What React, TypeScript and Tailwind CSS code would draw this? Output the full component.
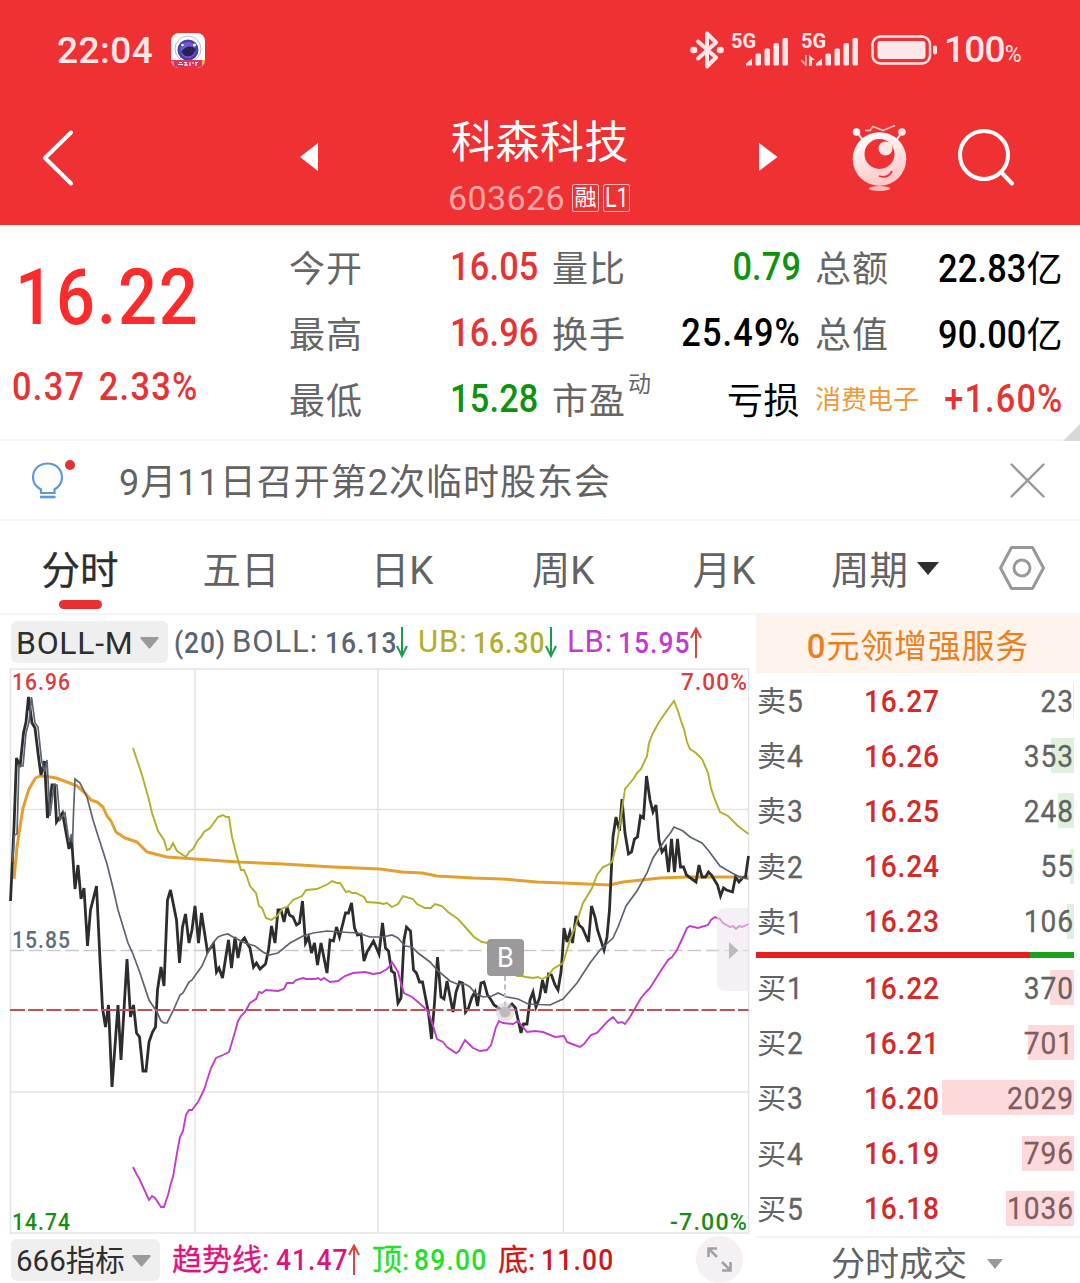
import type { ReactNode } from "react";
import { clsx } from "clsx";

type Metric = { label: string; value: string; unit?: string; tone: string; sup?: string; tag?: boolean };

const METRICS: Metric[][] = [
  [
    { label: "今开", value: "16.05", tone: "text-[#e63434]" },
    { label: "最高", value: "16.96", tone: "text-[#e63434]" },
    { label: "最低", value: "15.28", tone: "text-[#0f930f]" },
  ],
  [
    { label: "量比", value: "0.79", tone: "text-[#0f930f]" },
    { label: "换手", value: "25.49%", tone: "text-black" },
    { label: "市盈", value: "", unit: "亏损", tone: "text-black", sup: "动" },
  ],
  [
    { label: "总额", value: "22.83", unit: "亿", tone: "text-black" },
    { label: "总值", value: "90.00", unit: "亿", tone: "text-black" },
    { label: "消费电子", value: "+1.60%", tone: "text-[#e63434]", tag: true },
  ],
];

const TABS = ["分时", "五日", "日K", "周K", "月K"];

const ASKS = [
  { label: "卖5", price: "16.27", volume: 23 },
  { label: "卖4", price: "16.26", volume: 353 },
  { label: "卖3", price: "16.25", volume: 248 },
  { label: "卖2", price: "16.24", volume: 55 },
  { label: "卖1", price: "16.23", volume: 106 },
];

const BIDS = [
  { label: "买1", price: "16.22", volume: 370 },
  { label: "买2", price: "16.21", volume: 701 },
  { label: "买3", price: "16.20", volume: 2029 },
  { label: "买4", price: "16.19", volume: 796 },
  { label: "买5", price: "16.18", volume: 1036 },
];

const MAX_VOLUME = 2029;

// Chart series, "x,y" pairs in the chart's own viewBox
const PRICE =
  "10.5,901 14,827 16.5,758 20,767 23.5,733 26,722 28.5,697 32,723 35,728 38.5,757 41,775 44.5,761 47.5,818 52,785 54.5,785 56.5,822 62.5,813 69,849 71.5,837 75,889 78,865 81,899 84,888 87.5,946 90.5,910 96.5,886 100,960 102.5,1008 105.5,1027 108.5,1005 112,1087 118,1005 121,1060 127,959 130.5,1017 133.5,1005 136.5,1033 139.5,1037 143,1071 146,1071 149,1042 152.5,1032 155.5,1027 157.5,990 161,967 164,986 167.5,900 170.5,890 176.5,920 179.5,963 182.5,927 185.5,914 189,943 192,930 195,906 198.5,943 201.5,913 207.5,952 213.5,944 216.5,972 219,968 222.5,978 228.5,940 231.5,968 235,937 238,958 241,942 244.5,938 247.5,944 250,948 253.5,967 256.5,963 260,969 265.5,964 268.5,950 271.5,926 275,943 278,910 281,910 284,922 287,907 289.5,915 293,917 296.5,925 299.5,923 302.5,901 305.5,943 308.5,937 311.5,953 314.5,943 317.5,965 321,943 327,973 330,940 333.5,941 336.5,927 339.5,937 345.5,913 348.5,913 351.5,903 354.5,928 357.5,935 361,934 364,961 367,952 373.5,941 379,954 382.5,923 385.5,948 388.5,951 391.5,971 394.5,973 398,1003 401,998 404,940 406.5,927 410.5,931 413.5,970 416.5,973 419.5,982 422.5,982 428.5,1013 431.5,1039 434.5,1003 437.5,957 441,997 444,999 447,981 453,1012 456,992 459.5,982 462.5,983 465.5,1012 468.5,1008 472,997 475,992 477.5,1006 481,983 484,982 487.5,995 490.5,999 494,1005 498.5,1008 505,1013 509,1007 512,1004 515.5,1008 521,1033 523.5,1024 527,1024 530,1000 533,992 536,1007 539.5,998 542.5,980 545.5,993 548.5,974 551.5,975 555,985 558,990 561,972 562.5,953 564,928 567,942 570,932 572.5,943 576,916 579,925 582.5,928 588.5,942 591.5,906 595,917 597.5,930 604,950 607,937 609.5,910 611.5,867 613,837 616,817 619.5,831 622,799 625,833 628.5,854 631.5,852 634.5,839 637.5,837 640.5,816 643.5,818 646.5,776 650,800 653,812 656,805 659,840 662,852 665.5,847 668.5,872 671.5,839 674.5,872 677.5,839 680.5,867 683.5,867 686.5,875 696,882 699,865 702,877 705.5,877 708.5,872 711.5,875 717.5,885 720.5,896 723.5,888 726.5,890 732.5,892 735.5,877 739,882 742.5,878 745.5,877 748.5,856";

const AVERAGE =
  "14,879 17,847 20,827 23,808 29,789 35.5,778 40,776 50,777 56,778 67,782 77,786 85,793 91,800 97,802 103,807 107,816 111,821 116,832 125,838 137,842 147,852 167,857 195,859 238,862 283,864 333,867 380,869 402,872 422,873 437,876 473,878 503,879 537,882 563,883 610,885 618,883 623,882 660,878 687,877 748.5,877";

const MID =
  "12.5,862 14.5,835 17,834 19,765 23,766 26,733 29,722 31.5,697 35,723 38,727 41.5,760 44.5,772 47,760 50,816 54,785 57,785 60,820 65,813 69,842 71.5,834 72.5,843 73.5,813 75,779 80,783 87,797 93,820 100,842 107,864 113,888 118,910 128,943 133,954 140,973 149,1000 157,1012 161,1021 164,1023 167,1023 173,1011 177,1002 180,995 183,993 189,982 192,980 202,966 208,952 213,943 218,937 223,935 228,934 233,937 245,943 255,946 263,952 269,955 278,953 290,943 303,936 313,933 327,931 340,932 358,933 370,937 383,937 392,935 398,938 405,946 412,947 418,953 430,962 437,970 450,981 457,984 465,984 470,987 475,993 483,997 492,996 498,993 507,997 518,999 528,1004 550,1005 563,999 577,983 590,963 600,950 613,938 618,927 626,906 637,891 647,873 653,858 665,840 671,832 674,827 683,831 690,837 702,843 708,850 720,866 732,873 742,878 748.5,879";

const UPPER =
  "133,748 142,775 149,800 152,813 158,831 164,840 167,850 170,849 173,843 177,851 186,857 189,852 193,849 198,840 201,837 204,832 210,828 218,817 223,815 226,817 229,817 232,837 236,853 241,870 244,870 247,877 250,886 256,893 259,906 262,908 266,918 271,920 277,916 283,908 287,907 293,900 302,896 306,890 317,889 328,884 332,881 337,883 340,883 346,892 349,891 352,893 356,893 364,897 367,902 380,903 383,904 387,903 392,907 398,904 403,896 413,899 417,904 425,908 431,908 435,904 442,906 448,912 458,919 467,929 474,937 482,942 488,943 503,965 517,976 522,976 526,977 533,978 538,977 542,979 548,976 553,969 563,963 567,950 570,940 575,927 583,903 592,888 597,875 603,867 608,865 612,862 617,843 621,817 625,789 630,783 634,778 637,773 641,769 647,756 649,743 653,733 659,722 668,709 674,701 678,711 681,721 684,729 687,742 690,749 696,753 702,759 708,773 711,788 714,797 720,812 728,816 738,826 748.5,834";

const LOWER =
  "133,1167 137,1175 139,1178 149,1200 152,1196 155,1198 161,1207 164,1207 168,1195 171,1183 173,1177 177,1153 180,1137 183,1131 186,1115 189,1110 192,1110 195,1106 198,1102 204,1090 211,1068 216,1058 223,1055 229,1052 235,1032 238,1021 241,1016 245,1012 250,1003 256,999 259,992 262,993 266,990 278,991 284,989 287,983 293,983 296,980 303,978 306,979 315,979 318,978 321,980 324,978 330,982 338,981 345,976 353,973 365,972 373,974 380,973 387,969 389,967 392,962 398,972 401,983 404,993 412,997 418,1002 427,1010 432,1022 437,1039 443,1042 447,1047 456,1053 459,1051 465,1040 473,1048 480,1051 487,1050 491,1045 493,1038 496,1027 499,1021 503,1023 513,1024 518,1021 527,1032 535,1031 543,1032 555,1037 564,1036 567,1042 572,1044 580,1047 584,1044 591,1035 597,1033 607,1022 613,1017 618,1023 622,1022 625,1024 630,1017 641,998 647,991 650,988 660,972 668,960 672,957 677,950 683,937 687,928 690,926 698,928 708,925 711,920 715,917 720,919 723,923 730,927 733,926 736,929 739,926 742,927 748.5,924";

// Narrow figures: condensed glyphs with open tracking
function Figure({ children, right, light, className }: { children: ReactNode; right?: boolean; light?: boolean; className?: string }) {
  return (
    <span
      className={clsx(
        "inline-block scale-x-[.88] whitespace-nowrap",
        light ? "font-normal [-webkit-text-stroke:0.300px]" : "font-medium",
        right ? "origin-right" : "origin-left",
        className,
      )}
    >
      {children}
    </span>
  );
}

function SignalBars() {
  return (
    <svg width="43" height="28" viewBox="0 0 43 28" fill="#ffe6e8">
      <path d="M0 27.500V25.500L6 20.500V26.500Q6 27.500 5 27.500Z" />
      <rect x="9.500" y="15.500" width="5.500" height="12" rx="1.500" />
      <rect x="18.500" y="10.500" width="5.500" height="17" rx="1.500" />
      <rect x="27.500" y="5" width="5.500" height="22.500" rx="1.500" />
      <rect x="36.500" y="0" width="5.500" height="27.500" rx="1.500" />
    </svg>
  );
}

function StatusBar() {
  return (
    <div className="h-[100px] flex items-center text-[#ffe6e8]">
      <span className="ml-[57px] w-[114px] text-[37px] leading-[40px] tracking-[0.500px] pt-[2px] font-medium">22:04</span>
      <svg width="34" height="35" viewBox="0 0 34 35">
        <defs>
          <clipPath id="app-icon">
            <rect width="34" height="35" rx="8" />
          </clipPath>
        </defs>
        <g clipPath="url(#app-icon)">
          <rect width="34" height="35" fill="#fff" />
          <circle cx="17" cy="16" r="13" fill="none" stroke="#b9bdc6" strokeWidth="1" />
          <circle cx="17" cy="17" r="10.500" fill="#4b3fa6" />
          <circle cx="17" cy="17" r="8" fill="#6c5bd4" />
          <path d="M10 19Q17 10 25 16Q22 25 14 23Z" fill="#2b2152" />
          <circle cx="11.500" cy="12" r="1.200" fill="#fff" />
          <circle cx="23.500" cy="12" r="1.500" fill="#fff" />
          <rect y="27" width="34" height="8" fill="#d8355f" />
          <rect y="28" width="3" height="7" fill="#e47ad0" />
          <rect x="31" y="27" width="3" height="8" fill="#f0b04a" />
          <path d="M8 29.500h3M7 31.500h5M13 29.500h3M13 32h4M15 29v4M19 29v4M21 30h2M24 29.500h3M25 29v4" stroke="#fff" strokeWidth=".9" />
        </g>
      </svg>
      <svg className="ml-[485px] shrink-0" width="34" height="38" viewBox="0 0 34 38" fill="none" stroke="#ffe6e8" strokeWidth="4" strokeLinecap="round" strokeLinejoin="round">
        <path d="M8 10.500L26 26.500L17 35.500V2.500L26 11.500L8 27.500" />
        <path d="M3.500 19h.6M30 19h.6" strokeWidth="6.500" />
      </svg>
      <div className="relative ml-[7px] w-[58px] h-[38px] flex items-end justify-end pb-[3px]">
        <span className="absolute left-0 top-0 text-[20px] leading-[20px] font-bold">5G</span>
        <SignalBars />
      </div>
      <div className="relative ml-3 w-[58px] h-[38px] flex items-end justify-end pb-[3px]">
        <span className="absolute left-0 top-0 text-[20px] leading-[20px] font-bold">5G</span>
        <svg className="absolute left-0 bottom-[3px]" width="14" height="11" viewBox="0 0 14 11">
          <path d="M5 0V10L0 5" fill="none" stroke="#fb9a9d" strokeWidth="2" />
          <path d="M8 0L14 5H11V11H8Z" fill="#ffe6e8" />
        </svg>
        <SignalBars />
      </div>
      <svg className="ml-3" width="67" height="30" viewBox="0 0 67 30">
        <rect x="1.500" y="1.500" width="57.500" height="27" rx="8" fill="none" stroke="#ffe6e8" strokeWidth="2.400" />
        <rect x="6.500" y="6" width="48" height="18" rx="3" fill="#ffe6e8" />
        <rect x="62" y="10.500" width="4" height="9" rx="2" fill="#ffe6e8" />
      </svg>
      <div className="ml-[6px] pt-[3px] flex items-baseline font-medium">
        <span className="text-[37px] leading-[40px] tracking-[-0.800px]">100</span>
        <span className="text-[23px] font-normal">%</span>
      </div>
    </div>
  );
}

function TitleBar() {
  return (
    <div className="h-[125px] flex items-start">
      <svg className="ml-[41px] mt-[29px]" width="34" height="58" viewBox="0 0 34 58" fill="none" stroke="#fff" strokeWidth="4" strokeLinecap="round" strokeLinejoin="round">
        <path d="M30 3.500L4 29L30 54.500" />
      </svg>
      <svg className="ml-[225px] mt-[43px]" width="19" height="28" viewBox="0 0 19 28" fill="#fff">
        <path d="M0 14L18 0V28Z" />
      </svg>
      <div className="ml-[119px] mr-[119px] w-[202px] flex flex-col items-center">
        <h1 className="mt-[17px] ml-[2px] text-[44px] leading-[52px] tracking-[0.500px] text-white whitespace-nowrap">科森科技</h1>
        <div className="mt-[11px] flex items-center gap-[4px] text-white">
          <span className="mr-[3px] text-[34px] leading-[36px] text-[#fba5a6] tracking-[0.400px]">603626</span>
          <span className="w-[27px] h-[28px] border border-[#fbb] rounded-[2px] text-[22px] leading-[26px] text-center">融</span>
          <span className="w-[27px] h-[28px] border border-[#fbb] rounded-[2px] flex justify-center text-[27px] leading-[27px]">
            <span className="scale-x-[.8]">L1</span>
          </span>
        </div>
      </div>
      <svg className="mt-[43px]" width="19" height="28" viewBox="0 0 19 28" fill="#fff">
        <path d="M18.500 14L0 0V28Z" />
      </svg>
      <svg className="ml-[73px] mt-[22px]" width="56" height="70" viewBox="851 122 56 70">
        <defs>
          <linearGradient id="mascot" x1="0.300" y1="0" x2="0.600" y2="1">
            <stop offset="0" stopColor="#fff" />
            <stop offset="1" stopColor="#ffc4c4" />
          </linearGradient>
        </defs>
        <path d="M857 132L864 142M902 132L895 142" stroke="#fff" strokeWidth="2" />
        <path d="M865 130.500H870L873 126.500L883 130.500L895 125.500" fill="none" stroke="#ffc9c9" strokeWidth="1.500" />
        <circle cx="856.500" cy="132" r="3.800" fill="#fff" />
        <circle cx="902" cy="132" r="3.800" fill="#ffe2e2" />
        <circle cx="879.500" cy="159" r="26.800" fill="url(#mascot)" />
        <circle cx="879.500" cy="154" r="15" fill="#ef3133" />
        <circle cx="885.500" cy="148.500" r="7" fill="#ffe6e6" />
        <path d="M879 176Q888 179 892 171" fill="none" stroke="#ef3133" strokeWidth="1.800" />
        <ellipse cx="879.500" cy="188.500" rx="10.500" ry="2.600" fill="#ffb9b9" />
      </svg>
      <svg className="ml-[50px] mt-[28px]" width="60" height="60" viewBox="0 0 60 60" fill="none" stroke="#fff" strokeWidth="4" strokeLinecap="round">
        <circle cx="27" cy="27" r="24" />
        <path d="M44.500 44.500L55 55.500" />
      </svg>
    </div>
  );
}

function QuotePanel() {
  return (
    <section className="relative h-[216px] flex border-b-2 border-[#f5f5f5]">
      <div className="w-[289px] pl-[12px] text-[#fc2c2c]">
        <p className="mt-[33px] pl-[3px] text-[78px] leading-[80px]">
          <Figure className="tracking-[2.200px]">16.22</Figure>
        </p>
        <p className="mt-[29px] text-[39px] leading-[40px] text-[#e63434]">
          <Figure className="tracking-[1.500px] [word-spacing:4px]">0.37 2.33%</Figure>
        </p>
      </div>
      <div className="flex gap-[15px] pt-[9px]">
        {METRICS.map((column, i) => (
          <div key={i} className="w-[248px]">
            {column.map((m) => (
              <div key={m.label} className="h-[66px] flex items-center justify-between whitespace-nowrap">
                <span
                  className={clsx(
                    "leading-[50px]",
                    m.tag ? "pt-[2px] text-[26px] text-[#f0993a]" : "pt-[6px] text-[36px] tracking-[1px] text-[#666]",
                  )}
                >
                  {m.label}
                  {m.sup && <sup className="text-[23px] top-[-22px] ml-0.5 leading-none">{m.sup}</sup>}
                </span>
                <span className={clsx("flex items-baseline text-[39px] leading-[50px]", m.unit ? "pt-[5px]" : "-mr-px", m.tone)}>
                  {m.value && (
                    <Figure right className={m.value.endsWith("%") ? "tracking-[1.300px]" : "tracking-[0.200px]"}>
                      {m.value}
                    </Figure>
                  )}
                  {m.unit && <span className="text-[36px] tracking-[0.500px]">{m.unit}</span>}
                </span>
              </div>
            ))}
          </div>
        ))}
      </div>
      <svg className="absolute right-0 bottom-[-2px]" width="17" height="17" viewBox="0 0 17 17" fill="#d8d8da">
        <path d="M17 0V17H0Z" />
      </svg>
    </section>
  );
}

function Notice() {
  return (
    <section className="h-[80px] flex items-center border-b-2 border-[#f5f5f5]">
      <svg className="ml-[30px] mb-[1px]" width="48" height="44" viewBox="0 0 48 44" fill="none">
        <path d="M11 35V31.500C6.500 29 3 25 3 19.500C3 11 9.500 5.500 17.500 5.500S32 11 32 19.500C32 25 28.500 29 24.500 31.500V35Z" stroke="#5a98e0" strokeWidth="2.200" />
        <path d="M10 39H25.500" stroke="#5a98e0" strokeWidth="2.600" />
        <circle cx="40" cy="7" r="5" fill="#e53131" />
      </svg>
      <p className="ml-[41px] pt-[5px] flex-1 text-[36px] leading-[50px] tracking-[1px] text-[#636363]">9月11日召开第2次临时股东会</p>
      <svg className="mr-[35px]" width="35" height="35" viewBox="0 0 35 35" stroke="#999" strokeWidth="2.400" strokeLinecap="round">
        <path d="M1.500 1.500L33.500 33.500M33.500 1.500L1.500 33.500" />
      </svg>
    </section>
  );
}

function PeriodTabs() {
  return (
    <nav className="h-[94px] flex border-b-2 border-[#f5f5f5] text-[38.500px] text-[#636363]">
      {TABS.map((tab, i) => (
        <div key={tab} className="w-[161px] flex flex-col items-center">
          <span className={clsx("mt-[21px] leading-[58px] pr-px", i === 0 && "text-[#2d2d2d] [-webkit-text-stroke:0.300px]")}>{tab}</span>
          {i === 0 && <span className="w-[43px] h-[9px] rounded-full bg-[#e93030]" />}
        </div>
      ))}
      <div className="ml-[26px] flex items-start">
        <span className="mt-[21px] leading-[58px]">周期</span>
        <svg className="ml-[9px] mt-[41px]" width="22" height="13" viewBox="0 0 22 13" fill="#2f2f2f">
          <path d="M0 0H22L11 13Z" />
        </svg>
      </div>
      <svg className="ml-[60px] mt-[25px]" width="46" height="44" viewBox="0 0 46 44" fill="none" stroke="#999" strokeWidth="3" strokeLinejoin="round">
        <path d="M12.500 1.500H33.500L44.500 22L33.500 42.500H12.500L1.500 22Z" />
        <circle cx="23" cy="22" r="8" />
      </svg>
    </nav>
  );
}

function Arrow({ up }: { up?: boolean }) {
  return (
    <svg className="shrink-0" width="12" height="31" viewBox="0 0 12 31" fill="none" stroke={up ? "#d8453c" : "#1f9a48"} strokeWidth="2">
      {up ? <path d="M6 31V1.500M1 11L6 1.500L11 11" /> : <path d="M6 0V29.500M1 19L6 29L11 19" />}
    </svg>
  );
}

function Select({ label, className }: { label: string; className?: string }) {
  return (
    <button className={clsx("h-[42px] shrink-0 flex items-center justify-between rounded-md bg-[#efefef] pl-[5px] pr-[9px] text-[#2e2e2e]", className)}>
      <span className="leading-[42px] pt-[2px]">{label}</span>
      <svg className="mt-[3px]" width="19" height="12" viewBox="0 0 19 12" fill="#9a9a9a">
        <path d="M1 0H18Q19 0.500 18.500 1.500L10.500 11Q9.500 12 8.500 11L0.500 1.500Q0 0.500 1 0Z" />
      </svg>
    </button>
  );
}

function Chart() {
  return (
    <svg className="block" width="756" height="568" viewBox="0 668 756 568" fill="none">
      <g stroke="#e4e4e6" strokeWidth="1.500">
        <rect x="10.500" y="669" width="738" height="564" />
        <path d="M195 669V1233M378 669V1233M563.500 669V1233M10.500 809.500H748.500M10.500 1092H748.500" />
      </g>
      <path d="M10.500 950.500H748.500" stroke="#c9c9c9" strokeWidth="1.600" strokeDasharray="13.500 4.800" />
      <polyline points={AVERAGE} stroke="#e3a030" strokeWidth="3" strokeLinejoin="round" />
      <polyline points={PRICE} stroke="#2d2d2d" strokeWidth="2.800" />
      <polyline points={MID} stroke="#5c6472" strokeWidth="1.700" />
      <polyline points={UPPER} stroke="#b3ae2c" strokeWidth="1.900" />
      <polyline points={LOWER} stroke="#bf3fc9" strokeWidth="1.900" />
      <path d="M10 1010H748.500" stroke="#c4504f" strokeWidth="2.200" strokeDasharray="15 3.200" />

      <path d="M505 976V1006" stroke="#bcbcbc" strokeWidth="2" strokeDasharray="5 3.500" />
      <circle cx="505" cy="1012" r="9.500" fill="#d5d0d5" fillOpacity=".6" />
      <circle cx="505" cy="1012" r="5.500" fill="#bdbbbd" />
      <rect x="487" y="939" width="37" height="37" rx="4" fill="#9b999b" />
      <text x="505.500" y="967" fontSize="27" fill="#fff" textAnchor="middle">B</text>

      <path d="M749 908H725Q717 908 717 916V983Q717 991 725 991H749Z" fill="#ece4ee" fillOpacity=".55" />
      <path d="M729 942L738.500 950.500L729 959Z" fill="#bdb9be" />

      <g fontSize="24" fontWeight="500" letterSpacing="1.200">
        <text x="12" y="690" fill="#dd3b3b" textLength="59" lengthAdjust="spacingAndGlyphs">16.96</text>
        <text x="12" y="948" fill="#5d6f7f" textLength="59" lengthAdjust="spacingAndGlyphs">15.85</text>
        <text x="12" y="1230" fill="#188c18" textLength="59" lengthAdjust="spacingAndGlyphs">14.74</text>
        <text x="681" y="690" fill="#dd3b3b" textLength="67" lengthAdjust="spacingAndGlyphs">7.00%</text>
        <text x="670" y="1230" fill="#188c18" textLength="78" lengthAdjust="spacingAndGlyphs">-7.00%</text>
      </g>
    </svg>
  );
}

function OrderRow({ label, price, volume, side }: { label: string; price: string; volume: number; side: "ask" | "bid" }) {
  return (
    <div className="relative h-[55.200px] w-[318px] flex items-center text-[32px]">
      <span
        className={clsx("absolute right-0 h-[35px]", side === "ask" ? "bg-[#ddf1dd]" : "bg-[#fed9dc]")}
        style={{ width: Math.max(1, (volume / MAX_VOLUME) * 132.5) }}
      />
      <span className="relative w-[108px] pt-px pl-px text-[#636363]">
        <span className="text-[29px]">{label[0]}</span>
        <Figure light className="ml-px">
          {label[1]}
        </Figure>
      </span>
      <Figure className="tracking-[0.900px] text-[#d42a2a]">{price}</Figure>
      <Figure right light className={clsx("ml-auto tracking-[1px]", side === "bid" && volume > 400 ? "text-[#7f5d5f]" : "text-[#636363]")}>
        {volume}
      </Figure>
    </div>
  );
}

export default function App() {
  return (
    <main className="w-[1080px] h-[1283px] overflow-hidden bg-white font-[Roboto,'Noto_Sans_CJK_SC',sans-serif]">
      <header className="h-[225px] bg-[#ef3133]">
        <StatusBar />
        <TitleBar />
      </header>
      <QuotePanel />
      <Notice />
      <PeriodTabs />

      <div className="flex">
        {/* Chart column */}
        <div className="w-[756px]">
          <div className="h-[53px] pl-[11px] flex items-center text-[30px] whitespace-nowrap">
            <Select label="BOLL-M" className="w-[157px] text-[32px] tracking-[0.700px]" />
            <div className="ml-[6px] pt-[2px] w-[58px] text-[#5c6472]">
              <Figure className="tracking-[1px]">(20)</Figure>
            </div>
            <div className="pt-[2px] w-[186px] flex items-center text-[#5c6472]">
              <span className="w-[93px] text-[31px] tracking-[0.900px]">BOLL:</span>
              <Figure className="w-[71px] tracking-[1.200px]">16.13</Figure>
              <Arrow />
            </div>
            <div className="pt-[2px] w-[149px] flex items-center text-[#b3ae2c]">
              <span className="w-[55px] text-[31px] tracking-[0.900px]">UB:</span>
              <Figure className="w-[72px] tracking-[1.200px]">16.30</Figure>
              <Arrow />
            </div>
            <div className="pt-[2px] flex items-center text-[#c13ccb]">
              <span className="w-[51px] text-[31px] tracking-[0.900px]">LB:</span>
              <Figure className="w-[72px] tracking-[1.200px]">15.95</Figure>
              <Arrow up />
            </div>
          </div>
          <Chart />
          <div className="h-[47px] pl-[11px] flex items-center text-[30px] whitespace-nowrap">
            <Select label="666指标" className="w-[149px] text-[29.500px]" />
            <div className="ml-[12px] w-[200px] flex items-center text-[#e0137e]">
              <span className="w-[104px] [-webkit-text-stroke:0.300px]">趋势线:</span>
              <Figure className="w-[72px] tracking-[1.200px]">41.47</Figure>
              <Arrow up />
            </div>
            <div className="w-[126px] flex items-center text-[#25e025]">
              <span className="w-[43px] [-webkit-text-stroke:0.300px]">顶:</span>
              <Figure className="tracking-[1.400px]">89.00</Figure>
            </div>
            <div className="w-[198px] flex items-center text-[#cf1717]">
              <span className="w-[43px] [-webkit-text-stroke:0.300px]">底:</span>
              <Figure className="tracking-[1.400px]">11.00</Figure>
            </div>
            <span className="size-[47px] shrink-0 rounded-full bg-[#f4f0f4] flex items-center justify-center">
              <svg width="25" height="25" viewBox="0 0 25 25" fill="none" stroke="#a3a1a3" strokeWidth="2.600">
                <path d="M1.500 10V1.500H10M1.500 1.500L10 10M23.500 15V23.500H15M23.500 23.500L15 15" />
              </svg>
            </span>
          </div>
        </div>

        {/* Order book */}
        <div className="w-[324px]">
          <div className="h-[58px] pt-[2px] bg-[#fef3ea] text-center text-[#ec7f1a] leading-[60px] text-[33px] tracking-[0.800px]">
            <span className="font-medium">0</span>元领增强服务
          </div>
          {ASKS.map((row) => (
            <OrderRow key={row.label} side="ask" {...row} />
          ))}
          <div className="mt-[3px] mb-[2px] w-[318px] h-[6px] flex">
            <span className="w-[274px] bg-[#ea1c1c]" />
            <span className="flex-1 bg-[#1c9f1c]" />
          </div>
          {BIDS.map((row) => (
            <OrderRow key={row.label} side="bid" {...row} />
          ))}
          <div className="border-t-2 border-[#f3f3f3] h-[46px] pt-[9px] pl-[75px] flex items-center text-[34px] text-[#636363]">
            <span className="leading-[34px]">分时成交</span>
            <svg className="ml-[20px]" width="16" height="10" viewBox="0 0 16 10" fill="#9a9a9a">
              <path d="M0 0H16L8 10Z" />
            </svg>
          </div>
        </div>
      </div>
    </main>
  );
}
